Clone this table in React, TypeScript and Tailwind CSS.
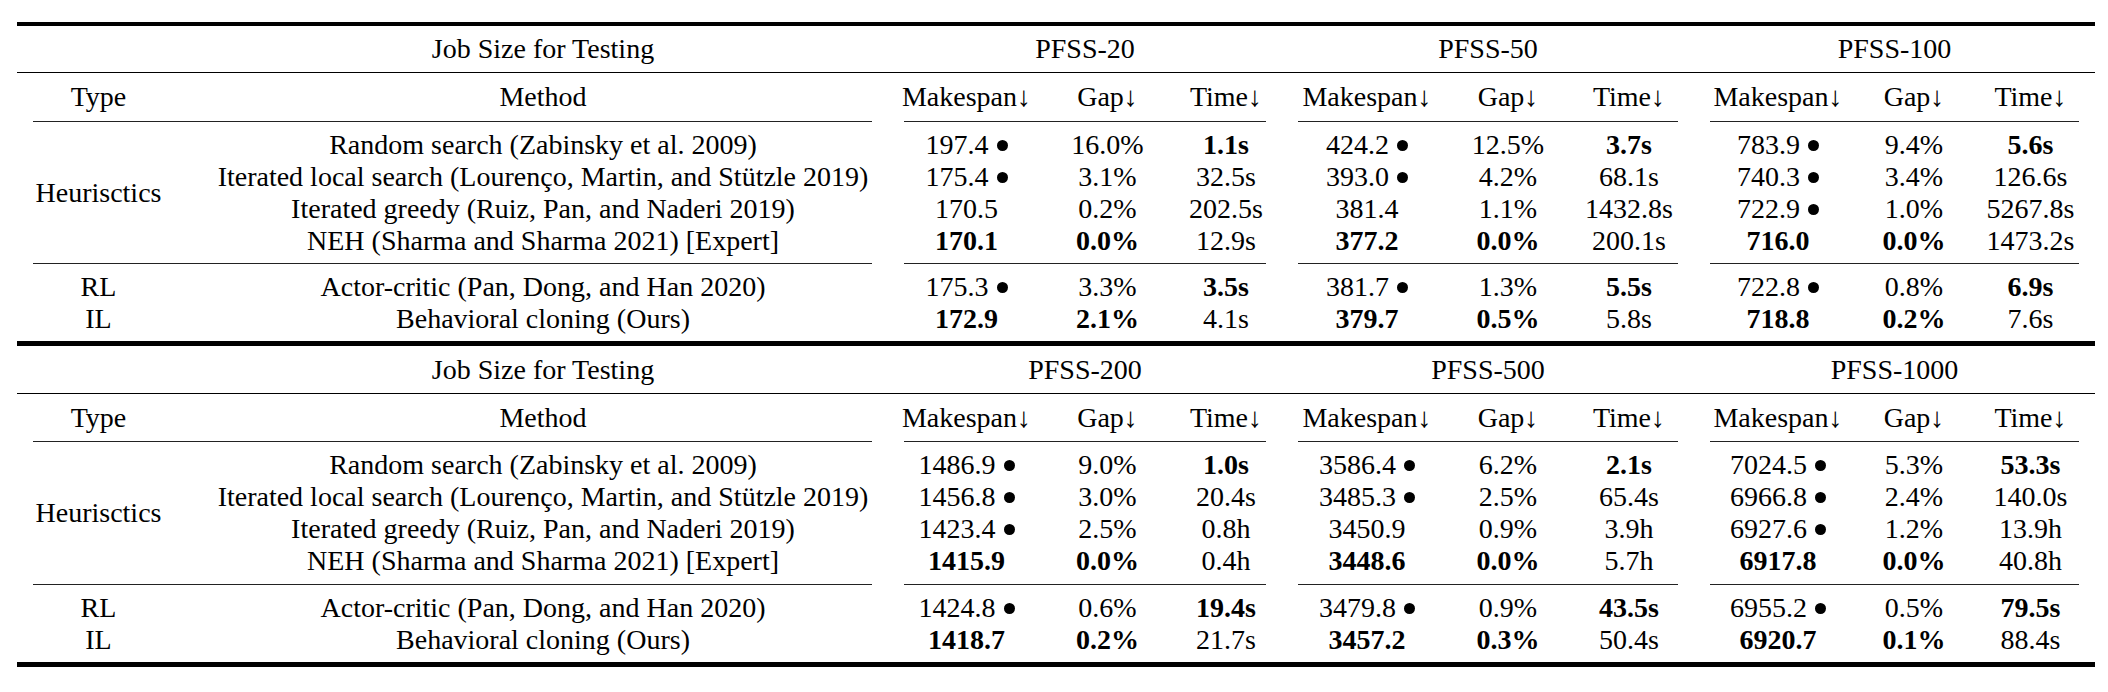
import React from 'react';

const cols = 'grid grid-cols-[163px_708px_157px_125px_112px_170px_112px_130px_168px_104px_129px]';

type Cell = { v: string; b?: boolean; dot?: boolean };
type Row = { method: string; cells: Cell[] };

const c = (v: string, b?: boolean): Cell => {
    if (v.endsWith(' •')) return { v: v.slice(0, -2), b, dot: true };
    return { v, b };
};

const methods = [
    'Random search (Zabinsky et al. 2009)',
    'Iterated local search (Lourenço, Martin, and Stützle 2019)',
    'Iterated greedy (Ruiz, Pan, and Naderi 2019)',
    'NEH (Sharma and Sharma 2021) [Expert]',
    'Actor-critic (Pan, Dong, and Han 2020)',
    'Behavioral cloning (Ours)',
];

const top: Cell[][] = [
    [c('197.4 •'), c('16.0%'), c('1.1s', true), c('424.2 •'), c('12.5%'), c('3.7s', true), c('783.9 •'), c('9.4%'), c('5.6s', true)],
    [c('175.4 •'), c('3.1%'), c('32.5s'), c('393.0 •'), c('4.2%'), c('68.1s'), c('740.3 •'), c('3.4%'), c('126.6s')],
    [c('170.5'), c('0.2%'), c('202.5s'), c('381.4'), c('1.1%'), c('1432.8s'), c('722.9 •'), c('1.0%'), c('5267.8s')],
    [c('170.1', true), c('0.0%', true), c('12.9s'), c('377.2', true), c('0.0%', true), c('200.1s'), c('716.0', true), c('0.0%', true), c('1473.2s')],
    [c('175.3 •'), c('3.3%'), c('3.5s', true), c('381.7 •'), c('1.3%'), c('5.5s', true), c('722.8 •'), c('0.8%'), c('6.9s', true)],
    [c('172.9', true), c('2.1%', true), c('4.1s'), c('379.7', true), c('0.5%', true), c('5.8s'), c('718.8', true), c('0.2%', true), c('7.6s')],
];

const bottom: Cell[][] = [
    [c('1486.9 •'), c('9.0%'), c('1.0s', true), c('3586.4 •'), c('6.2%'), c('2.1s', true), c('7024.5 •'), c('5.3%'), c('53.3s', true)],
    [c('1456.8 •'), c('3.0%'), c('20.4s'), c('3485.3 •'), c('2.5%'), c('65.4s'), c('6966.8 •'), c('2.4%'), c('140.0s')],
    [c('1423.4 •'), c('2.5%'), c('0.8h'), c('3450.9'), c('0.9%'), c('3.9h'), c('6927.6 •'), c('1.2%'), c('13.9h')],
    [c('1415.9', true), c('0.0%', true), c('0.4h'), c('3448.6', true), c('0.0%', true), c('5.7h'), c('6917.8', true), c('0.0%', true), c('40.8h')],
    [c('1424.8 •'), c('0.6%'), c('19.4s', true), c('3479.8 •'), c('0.9%'), c('43.5s', true), c('6955.2 •'), c('0.5%'), c('79.5s', true)],
    [c('1418.7', true), c('0.2%', true), c('21.7s'), c('3457.2', true), c('0.3%', true), c('50.4s'), c('6920.7', true), c('0.1%', true), c('88.4s')],
];

function Cmid() {
    return (
        <div className={cols}>
            <div className="col-span-2 mx-[16px] h-px bg-[#222]" />
            <div className="col-span-3 mx-[16px] h-px bg-[#222]" />
            <div className="col-span-3 mx-[16px] h-px bg-[#222]" />
            <div className="col-span-3 mx-[16px] h-px bg-[#222]" />
        </div>
    );
}

function DataRow({ row }: { row: Row }) {
    return (
        <>
            <div className="h-[32px] pl-[18px] flex items-center justify-center whitespace-nowrap">{row.method}</div>
            {row.cells.map((cell, i) => (
                <div key={i} className={'h-[32px] flex items-center justify-center whitespace-nowrap ' + (cell.b ? 'font-bold' : '')}>
                    {cell.v}
                    {cell.dot && <span className="ml-[8px] inline-block w-[11px] h-[11px] rounded-full bg-black" />}
                </div>
            ))}
        </>
    );
}

function Block({ groups, data, first }: { groups: string[]; data: Cell[][]; first?: boolean }) {
    const rows: Row[] = data.map((cells, i) => ({ method: methods[i], cells }));
    return (
        <div>
            {first && <div className="h-[4px] bg-black" />}
            <div className={cols + ' items-center text-center ' + (first ? 'h-[46px]' : 'h-[47px]')}>
                <div />
                <div className="pl-[18px]">Job Size for Testing</div>
                {groups.map(g => (
                    <div key={g} className="col-span-3">{g}</div>
                ))}
            </div>
            <div className="h-px bg-black" />
            <div className={cols + ' items-center text-center ' + (first ? 'h-[48px]' : 'h-[47px]')}>
                <div>Type</div>
                <div className="pl-[18px]">Method</div>
                {[0, 1, 2].map(i => (
                    <React.Fragment key={i}>
                        <div>Makespan↓</div>
                        <div>Gap↓</div>
                        <div>Time↓</div>
                    </React.Fragment>
                ))}
            </div>
            <Cmid />
            <div className={cols + ' pt-[7px] ' + (first ? 'pb-[6px]' : 'pb-[7px]')}>
                <div className="row-span-4 flex items-center justify-center">Heurisctics</div>
                {rows.slice(0, 4).map((r, i) => (
                    <DataRow key={i} row={r} />
                ))}
            </div>
            <Cmid />
            <div className={cols + ' pt-[7px] pb-[6px]'}>
                <div className="h-[32px] flex items-center justify-center">RL</div>
                <DataRow row={rows[4]} />
                <div className="h-[32px] flex items-center justify-center">IL</div>
                <DataRow row={rows[5]} />
            </div>
            <div className="h-[5px] bg-black" />
        </div>
    );
}

export default function App() {
    return (
        <div className="w-[2108px] h-[692px] bg-white text-black pl-[17px] pt-[22px] font-[family-name:Liberation_Serif,serif] text-[28px] leading-none">
            <div className="w-[2078px]">
                <Block first groups={['PFSS-20', 'PFSS-50', 'PFSS-100']} data={top} />
                <Block groups={['PFSS-200', 'PFSS-500', 'PFSS-1000']} data={bottom} />
            </div>
        </div>
    );
}
